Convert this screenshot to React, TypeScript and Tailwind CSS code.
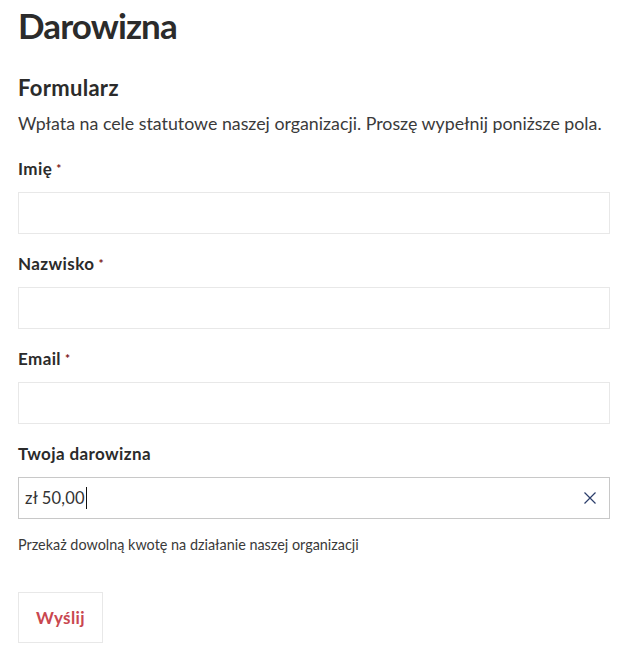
const font = { fontFamily: 'Lato, "Open Sans", sans-serif' };

function Field({ label }: { label: string }) {
  return (
    <div className="mb-[20px]">
      <label className="block text-[17px] font-bold text-[#2b2b2b] leading-[20px] tracking-[0.4px] mb-[13px]">
        {label}
        <span className="text-[#7a1414] text-[12px] align-top ml-[4px]">*</span>
      </label>
      <input className="block w-[592px] h-[42px] border border-[#e8e8e8] bg-white outline-none px-[7px] text-[16px]" />
    </div>
  );
}

export default function App() {
  return (
    <div className="min-h-screen bg-white pl-[18px] pt-[3px] text-[#2b2b2b]" style={font}>
      <h1 className="text-[35px] font-bold leading-[44px] text-[#2b2b2b] tracking-[-0.9px]">Darowizna</h1>

      <h2 className="mt-[27px] text-[22px] font-bold leading-[28px] tracking-[0.3px]">Formularz</h2>
      <p className="mt-[10px] text-[17.8px] leading-[22px] text-[#3a3a3a]">
        Wpłata na cele statutowe naszej organizacji. Proszę wypełnij poniższe pola.
      </p>

      <div className="mt-[25px]">
        <Field label="Imię" />
        <Field label="Nazwisko" />
        <Field label="Email" />

        <div>
          <label className="block text-[17px] font-bold leading-[20px] tracking-[0.4px] mb-[13px]">
            Twoja darowizna
          </label>
          <div className="flex items-center w-[592px] h-[42px] border border-[#c8c8c8] bg-white">
            <span className="pl-[6px] text-[16.5px] text-[#333] tracking-[0.2px]">zł 50,00</span>
            <span className="w-px h-[22px] bg-[#111] ml-[1px]" />
            <div className="flex-1" />
            <svg width="12" height="12" viewBox="0 0 12 12" className="mr-[13px] text-[#2c3e6b]">
              <path d="M0.5 0.5 11.5 11.5 M11.5 0.5 0.5 11.5" stroke="currentColor" strokeWidth="1.2" fill="none" />
            </svg>
          </div>
          <p className="mt-[16px] text-[14.4px] leading-[20px] text-[#3a3a3a]">
            Przekaż dowolną kwotę na działanie naszej organizacji
          </p>
        </div>

        <button className="mt-[37px] w-[85px] h-[51px] border border-[#e8e8e8] bg-white text-[#c9474f] font-bold text-[17px] tracking-[0.4px]">
          Wyślij
        </button>
      </div>
    </div>
  );
}
